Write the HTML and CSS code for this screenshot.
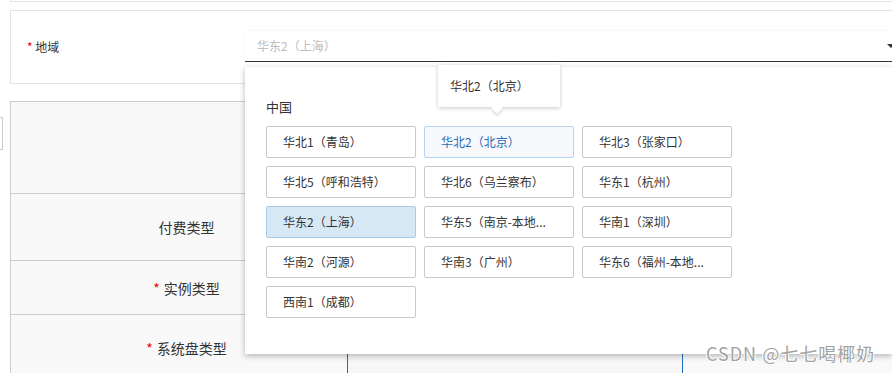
FILE: index.html
```html
<!DOCTYPE html>
<html lang="zh-CN">
<head>
  <meta charset="UTF-8" />
  <title>创建实例</title>
  <link rel="stylesheet" href="styles.css">
</head>
<body>
  <div class="page">
    <div class="side-tab"></div>
    <div class="prev-box"></div>

    <!-- 地域 -->
    <div class="region-box">
      <div class="region-label"><span class="req">*</span> 地域</div>
      <div class="select">
        <span class="placeholder">华东2（上海）</span>
        <span class="caret"></span>
      </div>
    </div>

    <!-- 配置表格 -->
    <div class="form-table">
      <div class="row row-1">
        <div class="cell-label"></div>
        <div class="cell-value"></div>
      </div>
      <div class="row row-2">
        <div class="cell-label">付费类型</div>
        <div class="cell-value"></div>
      </div>
      <div class="row row-3">
        <div class="cell-label"><span class="req">*</span> 实例类型</div>
        <div class="cell-value"></div>
      </div>
      <div class="row row-4">
        <div class="cell-label"><span class="req">*</span> 系统盘类型</div>
        <div class="cell-value"><div class="disk-input"></div></div>
      </div>
    </div>

    <!-- 下拉面板 -->
    <div class="dropdown">
      <div class="group-title">中国</div>
      <div class="options">
        <div class="option">华北1（青岛）</div>
        <div class="option hover">华北2（北京）</div>
        <div class="option">华北3（张家口）</div>
        <div class="option">华北5（呼和浩特）</div>
        <div class="option">华北6（乌兰察布）</div>
        <div class="option">华东1（杭州）</div>
        <div class="option active">华东2（上海）</div>
        <div class="option">华东5（南京-本地...</div>
        <div class="option">华南1（深圳）</div>
        <div class="option">华南2（河源）</div>
        <div class="option">华南3（广州）</div>
        <div class="option">华东6（福州-本地...</div>
        <div class="option">西南1（成都）</div>
      </div>
    </div>

    <div class="tooltip">华北2（北京）</div>
  </div>

  <div class="watermark">CSDN @七七喝椰奶</div>
</body>
</html>
```

FILE: styles.css
```css
html, body {
  margin: 0;
  height: 100%;
  overflow: hidden;
}

body {
  background: #fff;
  font-family: "Microsoft YaHei", "Noto Sans CJK SC", "Noto Sans", sans-serif;
  color: #333;
  position: relative;
}

.page {
  position: relative;
  padding-left: 10px;
  height: 373px;
  overflow: hidden;
}

.req {
  color: #e00;
}

.side-tab {
  position: absolute;
  left: -30px;
  top: 117px;
  width: 31px;
  height: 31px;
  border: 1px solid #ccc;
  background: #fff;
}

.prev-box {
  height: 1px;
  border: 1px solid #e4e4e4;
  border-top: none;
  border-right: none;
}

/* region */
.region-box {
  margin-top: 8px;
  height: 72px;
  border: 1px solid #e2e2e2;
  border-right: none;
  display: flex;
  align-items: center;
}

.region-label {
  width: 218px;
  padding-left: 16px;
  font-size: 12px;
  margin-top: -2px;
}

.select {
  flex: 1;
  height: 30px;
  margin-top: -2px;
  background: #fff;
  border-bottom: 1px solid #333;
  box-shadow: 0 -1px 2px rgba(0, 0, 0, 0.04);
  display: flex;
  align-items: center;
  padding-left: 12px;
  overflow: hidden;
}

.placeholder {
  font-size: 12px;
  color: #bbb;
  flex: 1;
}

.caret {
  width: 0;
  height: 0;
  border-left: 4px solid transparent;
  border-right: 4px solid transparent;
  border-top: 4px solid #333;
  margin-right: -3px;
}

/* table */
.form-table {
  margin-top: 17px;
  border: 1px solid #ccc;
  border-right: none;
  border-bottom: none;
  background: #f9f9f9;
  height: 272px;
}

.row {
  display: flex;
  border-bottom: 1px solid #ccc;
}

.row-1 { height: 91px; }
.row-2 { height: 66px; }
.row-3 { height: 53px; }
.row-4 { height: 58px; border-bottom: none; align-items: flex-start; }

.row-4 .cell-label {
  height: 66px;
}

.cell-label {
  width: 321px;
  padding-left: 15px;
  display: flex;
  align-items: center;
  justify-content: center;
  font-size: 14px;
}

.cell-label .req {
  margin-right: 4px;
}

.cell-value {
  flex: 1;
}

.disk-input {
  margin-top: 20px;
  width: 334px;
  height: 38px;
  border-left: 1px solid #1d6fc1;
  border-right: 1px solid #1d6fc1;
  background: #f7f7f7;
}

/* dropdown */
.dropdown {
  position: absolute;
  left: 245px;
  right: 0;
  top: 67px;
  height: 257px;
  padding: 30px 0 0 21px;
  background: #fff;
  box-shadow: 0 2px 6px rgba(0, 0, 0, 0.28);
}

.group-title {
  font-size: 13px;
  line-height: 20px;
  margin-bottom: 9px;
}

.options {
  display: grid;
  grid-template-columns: repeat(3, 150px);
  gap: 8px;
}

.option {
  height: 30px;
  line-height: 30px;
  border: 1px solid #c9c9c9;
  border-radius: 2px;
  padding-left: 16px;
  font-size: 12px;
  color: #333;
  white-space: nowrap;
  overflow: hidden;
}

.option.hover {
  background: #f7f9fc;
  border-color: #b7d4ee;
  color: #2a6cb5;
}

.option.active {
  background: #d7e8f5;
  border-color: #a9cbe6;
}

/* tooltip */
.tooltip {
  position: absolute;
  left: 438px;
  top: 65px;
  width: 110px;
  height: 42px;
  line-height: 42px;
  padding-left: 12px;
  font-size: 12px;
  background: #fff;
  box-shadow: 0 1px 4px rgba(0, 0, 0, 0.22);
}

.tooltip::after {
  content: "";
  position: absolute;
  left: 55px;
  bottom: -5px;
  width: 8px;
  height: 8px;
  background: #fff;
  transform: rotate(45deg);
  box-shadow: 2px 2px 3px rgba(0, 0, 0, 0.12);
}

.watermark {
  position: absolute;
  left: 706px;
  top: 340px;
  font-size: 18px;
  letter-spacing: 1px;
  color: #a3a3a3;
  text-shadow: 1px 0 #fff, -1px 0 #fff, 0 1px #fff, 0 -1px #fff;
  white-space: nowrap;
}
```
